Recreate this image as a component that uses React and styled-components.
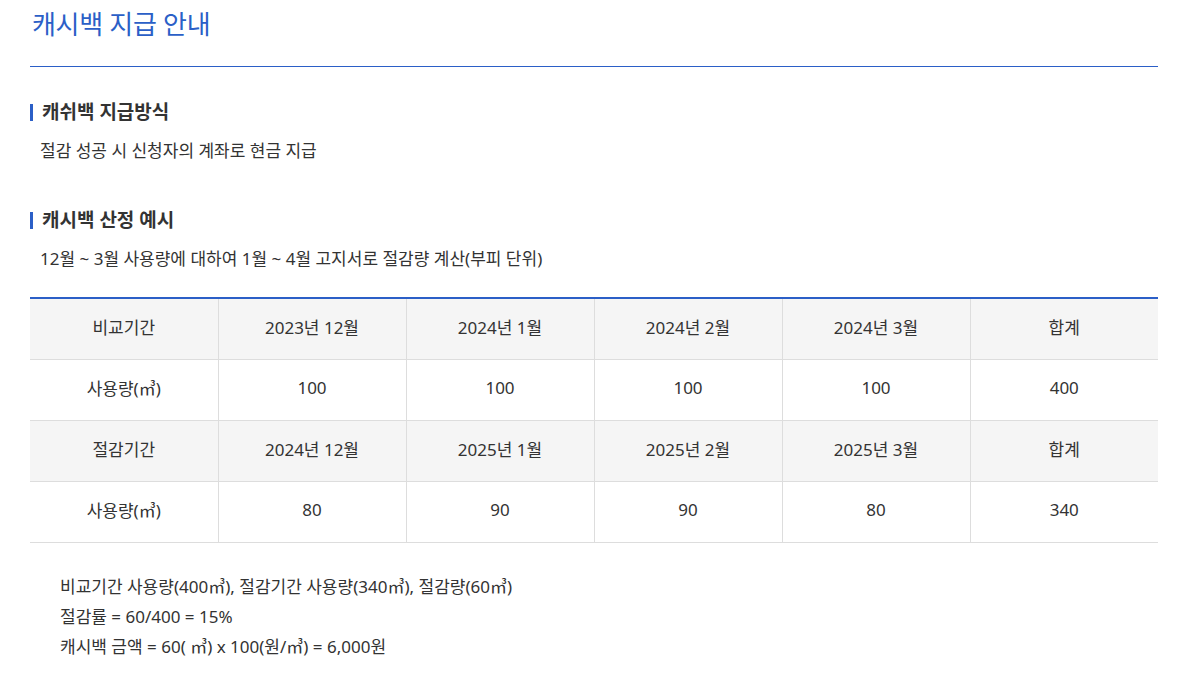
import React from "react";
import styled, { createGlobalStyle } from "styled-components";

const GlobalStyle = createGlobalStyle`
  body {
    margin: 0;
    background: #fff;
    font-family: "Noto Sans", "Noto Sans CJK KR", sans-serif;
    color: #333;
  }
`;

const periods = [
  {
    label: "비교기간",
    months: ["2023년 12월", "2024년 1월", "2024년 2월", "2024년 3월"],
    usage: ["100", "100", "100", "100"],
    total: "400",
  },
  {
    label: "절감기간",
    months: ["2024년 12월", "2025년 1월", "2025년 2월", "2025년 3월"],
    usage: ["80", "90", "90", "80"],
    total: "340",
  },
];

const App = () => {
  return (
    <>
      <GlobalStyle />
      <Page>
        <Title>캐시백 지급 안내</Title>

        <Section>
          <SectionHeading>캐쉬백 지급방식</SectionHeading>
          <SectionText>절감 성공 시 신청자의 계좌로 현금 지급</SectionText>
        </Section>

        <Section>
          <SectionHeading>캐시백 산정 예시</SectionHeading>
          <SectionText>12월 ~ 3월 사용량에 대하여 1월 ~ 4월 고지서로 절감량 계산(부피 단위)</SectionText>
        </Section>

        <Table>
          <tbody>
            {periods.map((p) => (
              <React.Fragment key={p.label}>
                <Row head>
                  <Cell>{p.label}</Cell>
                  {p.months.map((m) => (
                    <Cell key={m}>{m}</Cell>
                  ))}
                  <Cell>합계</Cell>
                </Row>
                <Row>
                  <Cell>사용량(㎥)</Cell>
                  {p.usage.map((u, i) => (
                    <Cell key={i}>{u}</Cell>
                  ))}
                  <Cell>{p.total}</Cell>
                </Row>
              </React.Fragment>
            ))}
          </tbody>
        </Table>

        <Notes>
          <li>비교기간 사용량(400㎥), 절감기간 사용량(340㎥), 절감량(60㎥)</li>
          <li>절감률 = 60/400 = 15%</li>
          <li>캐시백 금액 = 60( ㎥) x 100(원/㎥) = 6,000원</li>
        </Notes>
      </Page>
    </>
  );
};

export default App;

const Page = styled.div`
  width: 1128px;
  padding: 0 0 0 30px;
`;

const Title = styled.h1`
  margin: 0;
  padding: 6px 0 0 2px;
  height: 67px;
  box-sizing: border-box;
  font-size: 26px;
  font-weight: 400;
  line-height: 36px;
  color: #2b5fc7;
  border-bottom: 1px solid #2b5fc7;
  letter-spacing: -0.3px;
`;

const Section = styled.section`
  padding-top: 32px;

  & + & {
    padding-top: 44px;
  }
`;

const SectionHeading = styled.h2`
  position: relative;
  margin: 0;
  padding-left: 12px;
  font-size: 19px;
  font-weight: 700;
  line-height: 26px;
  color: #333;

  &::before {
    content: "";
    position: absolute;
    left: 0;
    top: 5px;
    width: 3px;
    height: 17px;
    background: #2b5fc7;
  }
`;

const SectionText = styled.p`
  margin: 14px 0 0 10px;
  font-size: 17px;
  line-height: 24px;
  color: #333;
`;

const Table = styled.table`
  width: 100%;
  margin-top: 26px;
  border-collapse: collapse;
  table-layout: fixed;
  border-top: 2px solid #2b5fc7;
`;

const Row = styled.tr`
  background: ${(p) => (p.head ? "#f5f5f5" : "#fff")};
`;

const Cell = styled.td`
  box-sizing: border-box;
  height: 61px;
  padding: 0 0 5px;
  text-align: center;
  font-size: 17px;
  color: #333;
  border-bottom: 1px solid #ddd;
  border-left: 1px solid #ddd;

  &:first-child {
    border-left: 0;
  }
`;

const Notes = styled.ul`
  margin: 29px 0 0;
  padding: 0 0 0 30px;
  list-style: none;

  li {
    font-size: 17px;
    line-height: 30px;
    color: #333;
  }
`;
